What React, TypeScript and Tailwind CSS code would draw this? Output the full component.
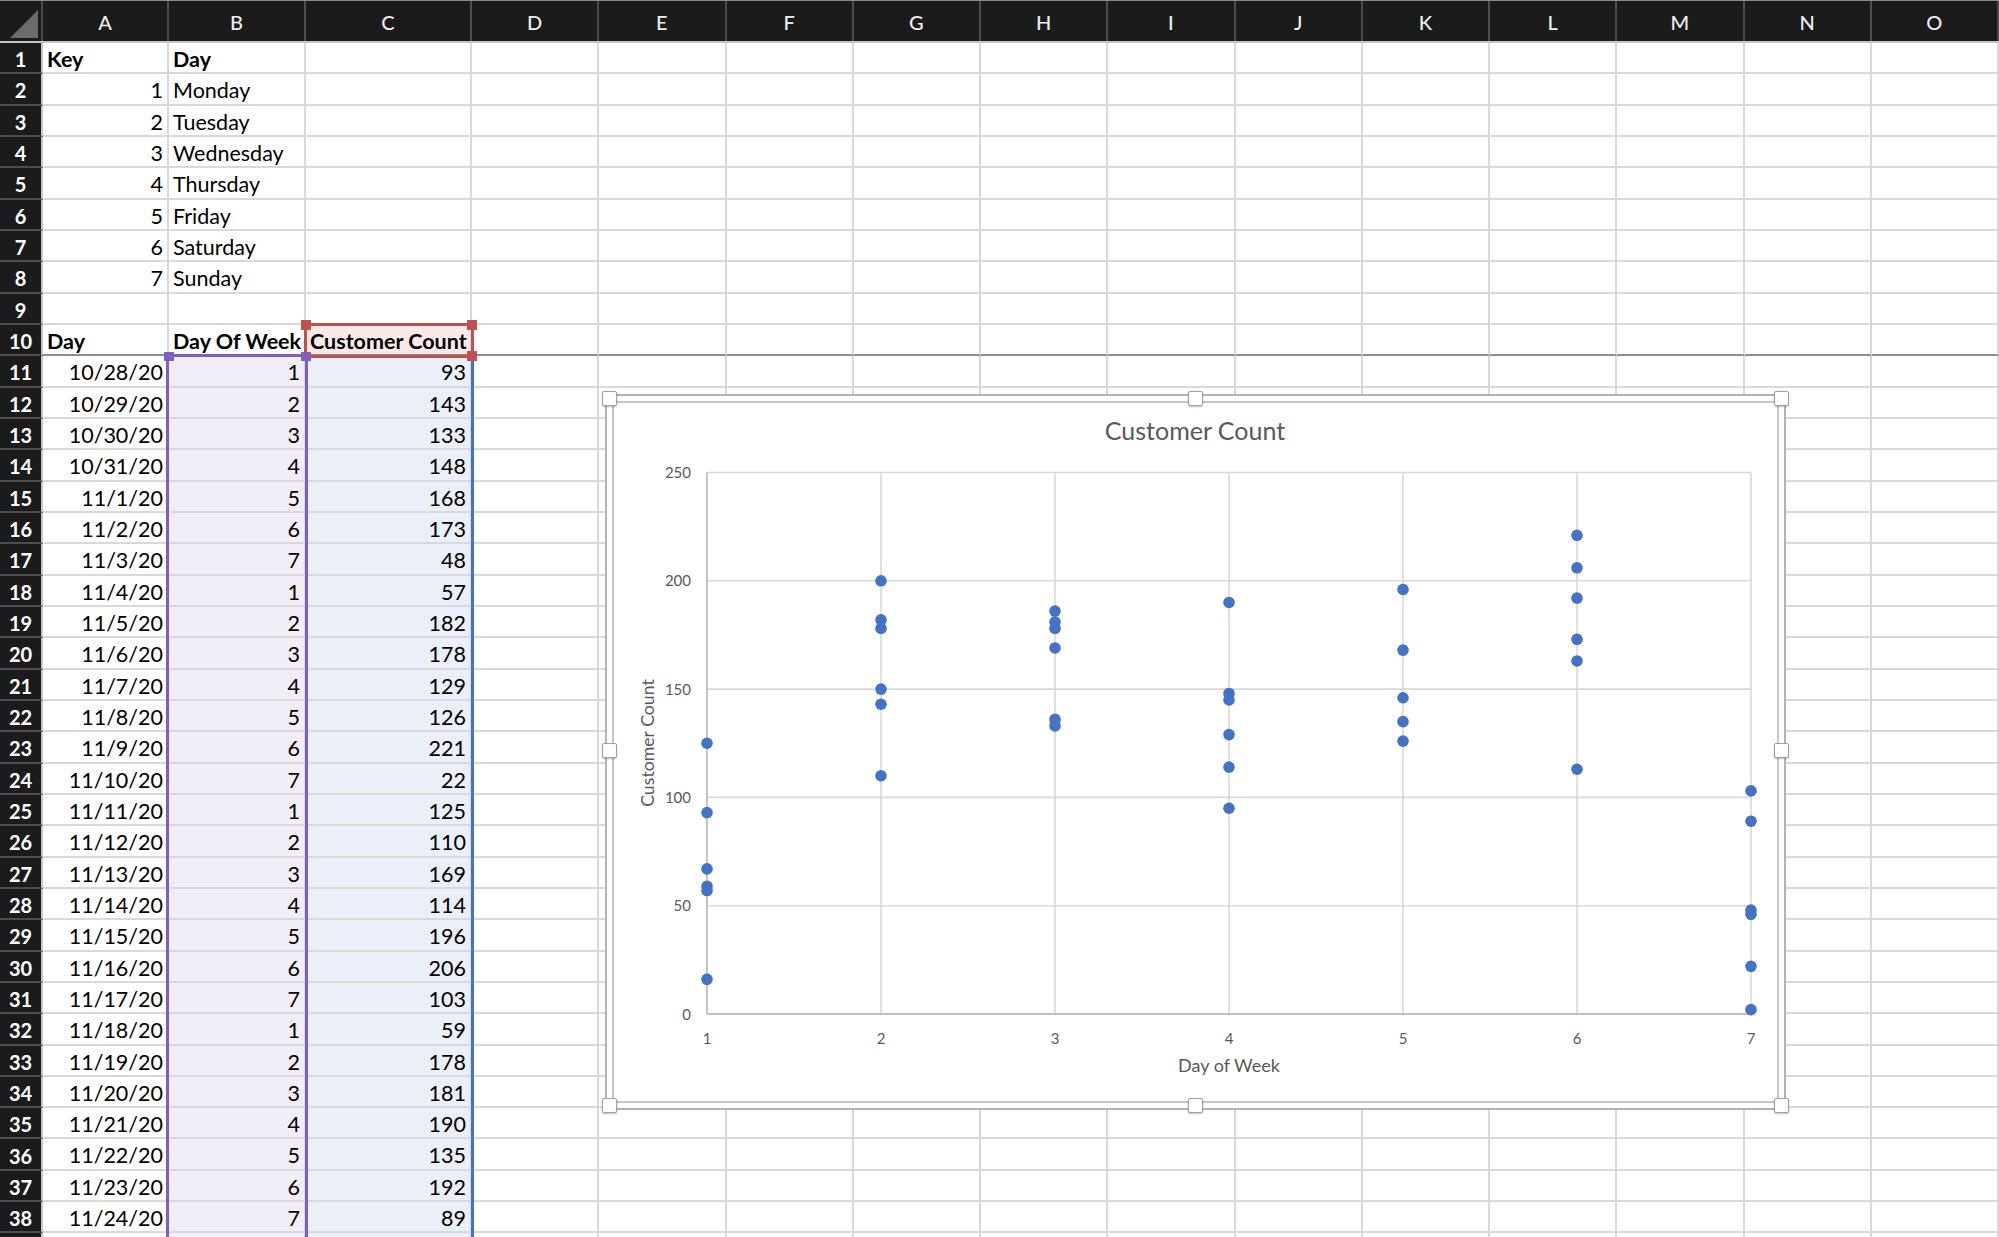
import React from 'react';

const COLS = ['A', 'B', 'C', 'D', 'E', 'F', 'G', 'H', 'I', 'J', 'K', 'L', 'M', 'N', 'O'];
const WIDTHS = [
  'w-[126px]',
  'w-[137px]',
  'w-[166px]',
  'w-[127.25px]', 'w-[127.25px]', 'w-[127.25px]', 'w-[127.25px]', 'w-[127.25px]', 'w-[127.25px]',
  'w-[127.25px]', 'w-[127.25px]', 'w-[127.25px]', 'w-[127.25px]', 'w-[127.25px]', 'w-[127.25px]',
];

const DAYS = ['Monday', 'Tuesday', 'Wednesday', 'Thursday', 'Friday', 'Saturday', 'Sunday'];

const VISITS: [string, number, number][] = [
  ['10/28/20', 1, 93], ['10/29/20', 2, 143], ['10/30/20', 3, 133], ['10/31/20', 4, 148],
  ['11/1/20', 5, 168], ['11/2/20', 6, 173], ['11/3/20', 7, 48], ['11/4/20', 1, 57],
  ['11/5/20', 2, 182], ['11/6/20', 3, 178], ['11/7/20', 4, 129], ['11/8/20', 5, 126],
  ['11/9/20', 6, 221], ['11/10/20', 7, 22], ['11/11/20', 1, 125], ['11/12/20', 2, 110],
  ['11/13/20', 3, 169], ['11/14/20', 4, 114], ['11/15/20', 5, 196], ['11/16/20', 6, 206],
  ['11/17/20', 7, 103], ['11/18/20', 1, 59], ['11/19/20', 2, 178], ['11/20/20', 3, 181],
  ['11/21/20', 4, 190], ['11/22/20', 5, 135], ['11/23/20', 6, 192], ['11/24/20', 7, 89],
];

// all points plotted, incl. rows below the fold
const POINTS: number[][] = [
  [125, 93, 67, 59, 57, 16],
  [200, 182, 178, 150, 143, 110],
  [186, 181, 178, 169, 136, 133],
  [190, 148, 145, 129, 114, 95],
  [196, 168, 146, 135, 126],
  [221, 206, 192, 173, 163, 113],
  [103, 89, 48, 46, 22, 2],
];

type Cell = { text?: string | number; right?: boolean; bold?: boolean; bg?: string };

function cellsFor(row: number): Cell[] {
  if (row === 1) return [{ text: 'Key', bold: true }, { text: 'Day', bold: true }];
  if (row >= 2 && row <= 8) return [{ text: row - 1, right: true }, { text: DAYS[row - 2] }];
  if (row === 10)
    return [
      { text: 'Day', bold: true },
      { text: 'Day Of Week', bold: true },
      { text: 'Customer Count', bold: true, bg: 'bg-[#fbe9e9]' },
    ];
  if (row >= 11) {
    const v = VISITS[row - 11];
    if (!v) return [{}, { bg: 'bg-[#f1eef7]' }, { bg: 'bg-[#ebeff9]' }];
    return [
      { text: v[0], right: true },
      { text: v[1], right: true, bg: 'bg-[#f1eef7]' },
      { text: v[2], right: true, bg: 'bg-[#ebeff9]' },
    ];
  }
  return [];
}

const Row = ({ n, label = true }: { n: number; label?: boolean }) => {
  const cells = cellsFor(n);
  return (
    <div className="flex h-[31.33px] shrink-0">
      <div className="w-[43px] shrink-0 flex items-center justify-center pt-[3px] bg-[#1b1b1b] border-b-2 border-b-[#4c4c4c] border-r-2 border-r-[#c6c6c6] text-white font-bold text-[20px] leading-none">
        {label ? n : null}
      </div>
      {COLS.map((col, i) => {
        const c = cells[i] || {};
        return (
          <div
            key={col}
            className={[
              WIDTHS[i],
              'shrink-0 border-r-2 border-r-[#d9d9d9] border-b-2 px-[4px] leading-[33px] whitespace-nowrap overflow-hidden text-[21.5px] text-black',
              n === 10 ? 'border-b-[#8d8d8d]' : 'border-b-[#d9d9d9]',
              c.right ? 'text-right' : 'text-left',
              c.bold ? 'font-bold' : '',
              c.bg ?? 'bg-white',
            ].join(' ')}
          >
            {c.text}
          </div>
        );
      })}
    </div>
  );
};

const x = (d: number) => 707 + (d - 1) * 174;
const y = (v: number) => 1014 - v * 2.166;

const Chart = () => (
  <svg width={1162} height={698} viewBox="614 403 1162 698" className="block">
    <text x={1195} y={440} textAnchor="middle" fontSize={25} fill="#595959">
      Customer Count
    </text>
    {[50, 100, 150, 200, 250].map((v) => (
      <line key={v} x1={707} x2={1751} y1={y(v)} y2={y(v)} stroke="#d9d9d9" strokeWidth={1.6} />
    ))}
    {[2, 3, 4, 5, 6, 7].map((d) => (
      <line key={d} x1={x(d)} x2={x(d)} y1={472.5} y2={1014} stroke="#d9d9d9" strokeWidth={1.6} />
    ))}
    <line x1={707} x2={707} y1={472.5} y2={1014} stroke="#bfbfbf" strokeWidth={1.8} />
    <line x1={707} x2={1751} y1={1014} y2={1014} stroke="#bfbfbf" strokeWidth={1.8} />
    {[0, 50, 100, 150, 200, 250].map((v) => (
      <text key={v} x={691} y={y(v) + 5.5} textAnchor="end" fontSize={15} fill="#595959">
        {v}
      </text>
    ))}
    {[1, 2, 3, 4, 5, 6, 7].map((d) => (
      <text key={d} x={x(d)} y={1044} textAnchor="middle" fontSize={15} fill="#595959">
        {d}
      </text>
    ))}
    <text x={1229} y={1072} textAnchor="middle" fontSize={18} fill="#595959">
      Day of Week
    </text>
    <text x={654} y={743} textAnchor="middle" fontSize={17.7} fill="#595959" transform="rotate(-90 654 743)">
      Customer Count
    </text>
    {POINTS.map((vals, i) =>
      vals.map((v, j) => <circle key={`${i}-${j}`} cx={x(i + 1)} cy={y(v)} r={5.8} fill="#4472c4" />)
    )}
  </svg>
);

const Handle = ({ className }: { className: string }) => (
  <div
    className={`absolute w-[15px] h-[15px] bg-white border border-[#a0a0a0] rounded-[2px] shadow-[0_1px_2px_rgba(0,0,0,0.25)] ${className}`}
  />
);

export default function App() {
  const rows = Array.from({ length: 39 }, (_, i) => i + 1);
  return (
    <div className="relative w-[1999px] h-[1237px] overflow-hidden bg-white font-['Lato','Liberation_Sans',sans-serif]">
      {/* column headers */}
      <div className="flex h-[43px] bg-[#1b1b1b] border-t border-t-[#8a8a8a] border-b-2 border-b-[#c6c6c6]">
        <div className="w-[43px] shrink-0 border-r-2 border-r-[#4c4c4c]">
          <svg width={41} height={40} viewBox="0 0 41 40">
            <polygon points="38,9 38,37 10,37" fill="#6c6c6c" />
          </svg>
        </div>
        {COLS.map((l, i) => (
          <div
            key={l}
            className={`${WIDTHS[i]} shrink-0 flex items-center justify-center pt-[2px] border-r-2 border-r-[#4c4c4c] text-[#eeeeee] text-[20px] font-medium`}
          >
            {l}
          </div>
        ))}
      </div>

      <div className="flex flex-col">
        {rows.map((n) => (
          <Row key={n} n={n} label={n < 39} />
        ))}
      </div>

      {/* reference highlights */}
      <div className="absolute left-[304px] top-[354px] w-[170px] h-[900px] border-r-[3px] border-r-[#4472c4]" />
      <div className="absolute left-[166px] top-[354px] w-[142px] h-[900px] border-[3px] border-[#7f5fbd]" />
      <div className="absolute left-[304px] top-[323px] w-[170px] h-[35px] border-[3px] border-[#c0504d]">
        <div className="absolute -left-[6px] -top-[6px] w-[10px] h-[10px] bg-[#c0504d]" />
        <div className="absolute -right-[6px] -top-[6px] w-[10px] h-[10px] bg-[#c0504d]" />
        <div className="absolute -right-[6px] -bottom-[6px] w-[10px] h-[10px] bg-[#c0504d]" />
      </div>
      <div className="absolute left-[164px] top-[352px] w-[10px] h-[9px] bg-[#7f5fbd]" />
      <div className="absolute left-[301px] top-[352px] w-[10px] h-[9px] bg-[#7f5fbd]" />

      {/* chart object floating over the sheet */}
      <div className="absolute left-[605px] top-[394px] w-[1181px] h-[716px] border-2 border-[#b3b3b3] bg-white p-[5px]">
        <div className="w-full h-full border-2 border-[#c6c6c6] bg-white">
          <Chart />
        </div>
        <Handle className="-left-[5px] -top-[5px]" />
        <Handle className="left-[581px] -top-[5px]" />
        <Handle className="-right-[5px] -top-[5px]" />
        <Handle className="-left-[5px] top-[347px]" />
        <Handle className="-right-[5px] top-[347px]" />
        <Handle className="-left-[5px] -bottom-[5px]" />
        <Handle className="left-[581px] -bottom-[5px]" />
        <Handle className="-right-[5px] -bottom-[5px]" />
      </div>
    </div>
  );
}
